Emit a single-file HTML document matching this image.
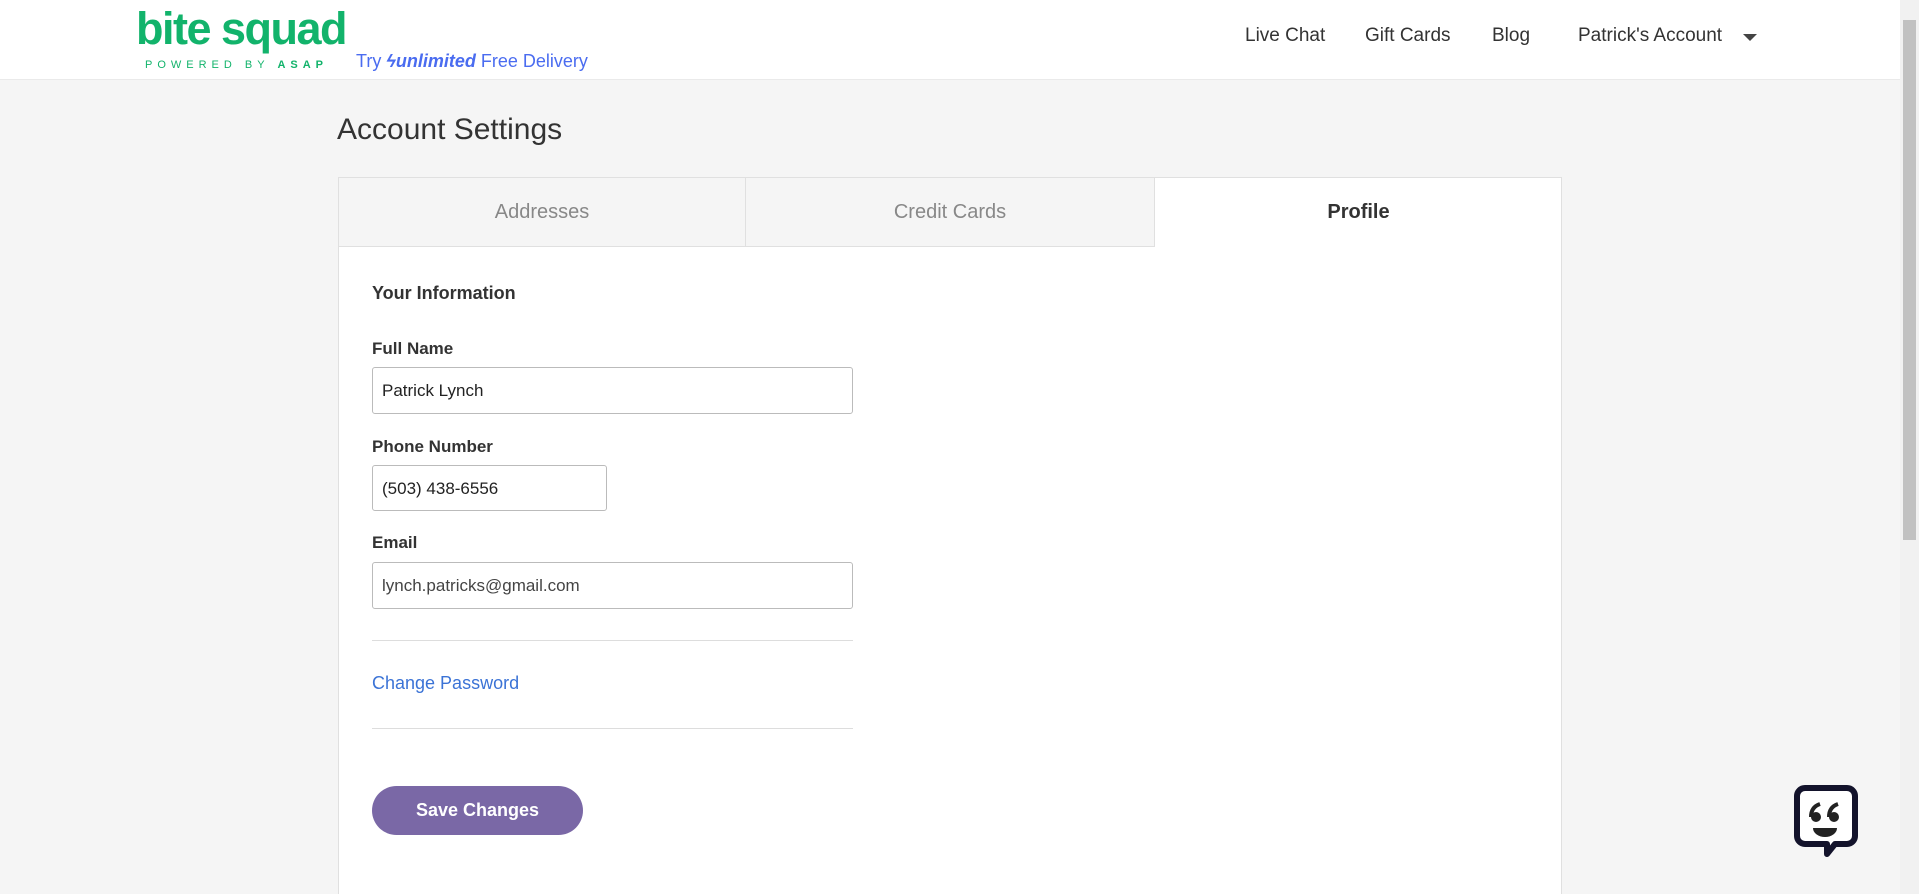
<!DOCTYPE html>
<html style="height:894px;overflow:hidden"><head><style>
*{box-sizing:border-box;margin:0;padding:0}
body{width:1919px;height:894px;overflow:hidden;background:#f5f5f5;font-family:"Liberation Sans",sans-serif;color:#333;position:relative}
.hdr{position:absolute;left:0;top:0;width:1900px;height:80px;background:#fff;border-bottom:1px solid #eaeaea}
.abs{position:absolute;white-space:nowrap}
.nav{font-size:19px;color:#333;top:25px}
.sb{position:absolute;right:0;top:0;width:19px;height:894px;background:#f1f1f1}
.sb div{position:absolute;left:3px;top:20px;width:13px;height:520px;background:#c1c1c1}
.card{position:absolute;left:338px;top:177px;width:1224px;height:730px;background:#fff;border:1px solid #e0e0e0}
.tab{position:absolute;top:0;height:69px;background:#f5f5f5;border-right:1px solid #e0e0e0;border-bottom:1px solid #e0e0e0;text-align:center;line-height:68px;font-size:20px;color:#888}
.lbl{font-size:17px;font-weight:bold;color:#333}
.inp{position:absolute;border:1px solid #bbb;border-radius:3px;background:#fff;font-size:17px;color:#222;padding-left:9px;line-height:45px}
.hr{position:absolute;left:372px;width:481px;height:1px;background:#ddd}
</style></head><body>
<div class="hdr">
 <div class="abs" style="left:136px;top:3px;font-size:45px;font-weight:bold;color:#12b36b;letter-spacing:-1.5px">bite squad</div>
 <div class="abs" style="left:145px;top:59px;font-size:11px;color:#12b36b;letter-spacing:5px">POWERED BY <b>ASAP</b></div>
 <div class="abs" style="left:356px;top:51px;font-size:18px;color:#4a6cf0">Try <b style="font-style:italic">ϟunlimited</b> Free Delivery</div>
 <div class="abs nav" style="left:1245px">Live Chat</div>
 <div class="abs nav" style="left:1365px">Gift Cards</div>
 <div class="abs nav" style="left:1492px">Blog</div>
 <div class="abs nav" style="left:1578px">Patrick's Account</div>
 <div class="abs" style="left:1743px;top:34px;width:0;height:0;border-left:7px solid transparent;border-right:7px solid transparent;border-top:7px solid #444"></div>
</div>
<div class="sb"><div></div></div>
<div class="abs" style="left:337px;top:113px;font-size:30px;color:#333">Account Settings</div>
<div class="card">
 <div class="tab" style="left:0;width:407px">Addresses</div>
 <div class="tab" style="left:407px;width:409px">Credit Cards</div>
 <div class="abs" style="left:816px;top:0;width:407px;line-height:68px;text-align:center;font-size:20px;font-weight:bold">Profile</div>
</div>
<div class="abs lbl" style="left:372px;top:283px;font-size:18px">Your Information</div>
<div class="abs lbl" style="left:372px;top:339px">Full Name</div>
<div class="inp" style="left:372px;top:367px;width:481px;height:47px">Patrick Lynch</div>
<div class="abs lbl" style="left:372px;top:437px">Phone Number</div>
<div class="inp" style="left:372px;top:465px;width:235px;height:46px">(503) 438-6556</div>
<div class="abs lbl" style="left:372px;top:533px">Email</div>
<div class="inp" style="left:372px;top:562px;width:481px;height:47px;color:#444">lynch.patricks@gmail.com</div>
<div class="hr" style="top:640px"></div>
<div class="abs" style="left:372px;top:673px;font-size:18px;color:#3b73d6">Change Password</div>
<div class="hr" style="top:728px"></div>
<div class="abs" style="left:372px;top:786px;width:211px;height:49px;border-radius:25px;background:#7a68a6;color:#fff;font-weight:bold;font-size:18px;text-align:center;line-height:49px">Save Changes</div>
<svg class="abs" style="left:1793px;top:784px" width="66" height="76" viewBox="0 0 66 76">
 <path d="M12 4h42a8 8 0 0 1 8 8v40a8 8 0 0 1-8 8H42l-8 10v-10H12a8 8 0 0 1-8-8V12a8 8 0 0 1 8-8z" fill="#fff" stroke="#13132b" stroke-width="6" stroke-linejoin="round"/>
 <circle cx="23" cy="33" r="5" fill="#222"/><path d="M18 33q0-10 9-13" stroke="#222" stroke-width="4" fill="none"/>
 <circle cx="41" cy="33" r="5" fill="#222"/><path d="M36 33q0-10 9-13" stroke="#222" stroke-width="4" fill="none"/>
 <path d="M20 44h24a12 9 0 0 1-24 0z" fill="#222"/>
</svg>
</body></html>
